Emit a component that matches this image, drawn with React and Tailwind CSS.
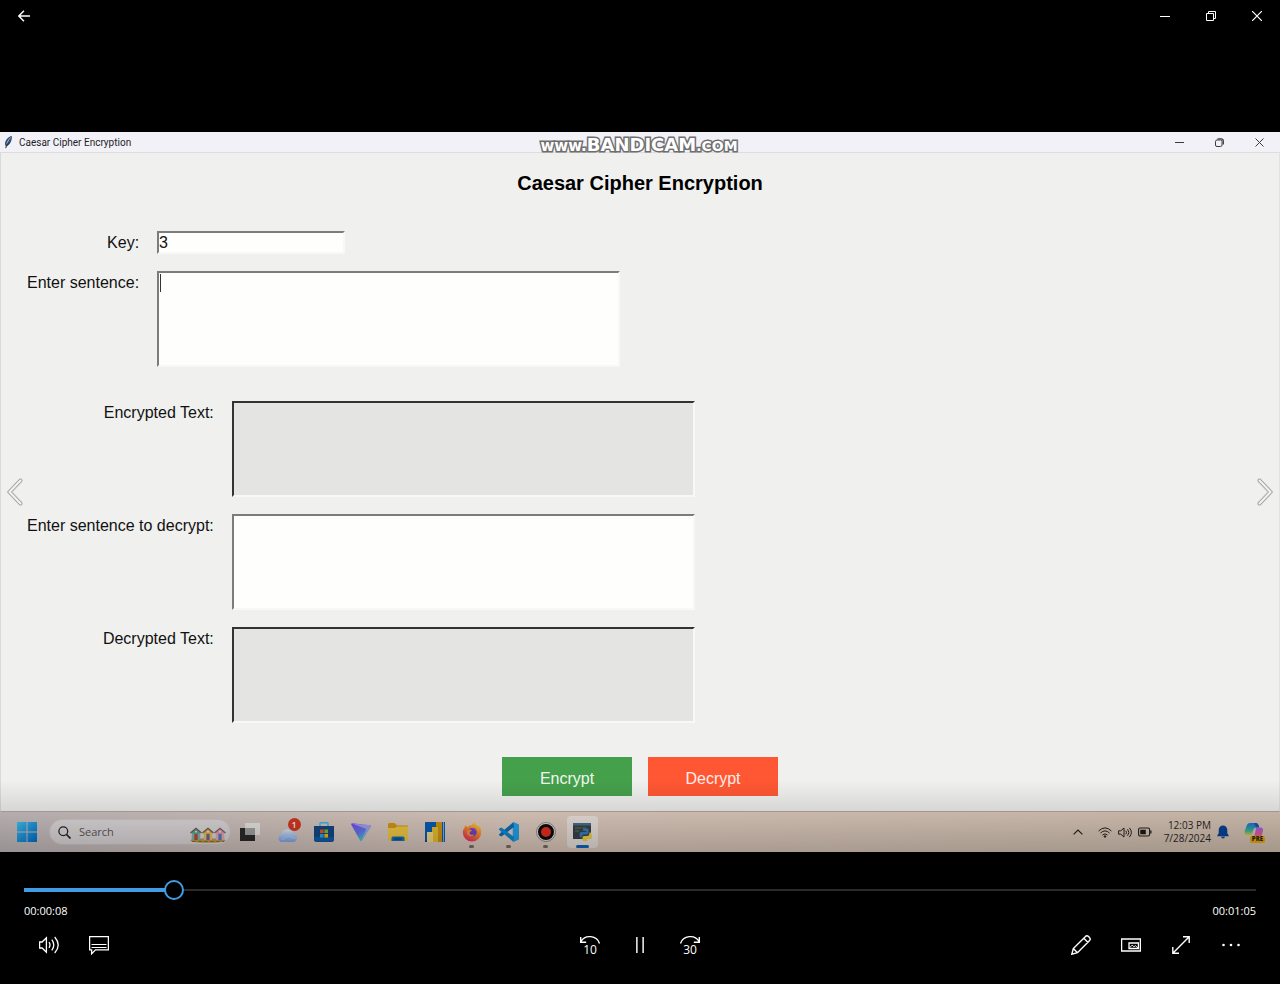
import React, { useState } from 'react';

const PLAYER_BUTTON =
  'flex h-[46px] w-[50px] items-center justify-center text-white hover:bg-white/10';

/* ---------- window caption icons ---------- */

function BackIcon() {
  return (
    <svg width="12" height="12" viewBox="0 0 12 12" fill="none" stroke="currentColor" strokeWidth="1.4">
      <path d="M12 6H1M6 .8.8 6 6 11.2" />
    </svg>
  );
}

function MinimizeIcon() {
  return (
    <svg width="10" height="10" viewBox="0 0 10 10" stroke="currentColor">
      <path d="M0 5.5h10" />
    </svg>
  );
}

function RestoreIcon() {
  return (
    <svg width="10" height="10" viewBox="0 0 10 10" fill="none" stroke="currentColor">
      <path d="M.5 2.500h7v7h-7zM2.500 2.500v-2h7v7h-2" />
    </svg>
  );
}

function CloseIcon() {
  return (
    <svg width="10" height="10" viewBox="0 0 10 10" fill="none" stroke="currentColor" strokeWidth="1.200">
      <path d="M0 0l10 10M10 0L0 10" />
    </svg>
  );
}

function RoundRestoreIcon() {
  return (
    <svg width="9" height="9" viewBox="0 0 9 9" fill="none" stroke="currentColor">
      <rect x=".5" y="2" width="6.500" height="6.500" rx="1.500" />
      <path d="M2.500 .9h3.700A2 2 0 0 1 8.300 2.900v3.600" strokeWidth="1.300" />
    </svg>
  );
}

function FeatherIcon() {
  return (
    <svg width="9" height="13" viewBox="0 0 9 13">
      <path d="M7.800 0C4.500.6 1 4.200 1 8.300l.6 1.500L1.500 13l.9-2.700C5.500 9.500 8.300 5 7.800 0z" fill="#2f4a68" />
      <path d="M7.200 1C5 2 2.600 5 2.200 8.500 4.600 6.800 6.800 4.500 7.200 1z" fill="#7fa6cf" />
      <path d="M6.500 2.500L1.800 12" stroke="#1c2733" strokeWidth=".7" />
    </svg>
  );
}

/* ---------- taskbar icons ---------- */

function StartIcon() {
  return (
    <svg width="20" height="20" viewBox="0 0 20 20">
      <defs>
        <linearGradient id="start" x1="0" y1="0" x2="1" y2="1">
          <stop offset="0" stopColor="#3fc4f5" />
          <stop offset="1" stopColor="#0070d0" />
        </linearGradient>
      </defs>
      <path d="M0 0h9.500v9.500H0zM10.500 0H20v9.500h-9.500zM0 10.500h9.500V20H0zM10.500 10.500H20V20h-9.500z" fill="url(#start)" />
    </svg>
  );
}

function SearchIcon() {
  return (
    <svg width="13" height="13" viewBox="0 0 13 13" fill="none" stroke="#26262a" strokeWidth="1.300">
      <circle cx="5.300" cy="5.300" r="4.400" />
      <path d="M8.500 8.500l4 4" strokeWidth="1.700" />
    </svg>
  );
}

function Hut({ x, wall, roof, door }) {
  return (
    <g transform={`translate(${x} 0)`}>
      <path d="M1.800 5.500L6 1.500l4.200 4V13H1.800z" fill={wall} />
      <path d="M.5 6L6 1.200 11.500 6" fill="none" stroke={roof} strokeWidth="1.200" />
      <path d="M3 6.500V13M9 6.500V13" stroke="#eee6df" strokeWidth=".6" />
      <rect x="4.500" y="7" width="3" height="6" fill={door} />
      <circle cx="6" cy="4.700" r=".9" fill="#f5f0e4" />
    </g>
  );
}

function BeachHutsIcon() {
  return (
    <svg width="36" height="16" viewBox="0 0 36 16">
      <ellipse cx="18" cy="13.500" rx="17.500" ry="2.300" fill="#c99b4a" />
      <Hut x={0} wall="#5aa895" roof="#6d5b58" door="#d0443b" />
      <Hut x={24} wall="#e79ab0" roof="#7b6265" door="#4d83c4" />
      <Hut x={12} wall="#e4b840" roof="#71594a" door="#7161a8" />
      <path d="M2 14.500h32" stroke="#8c7a35" strokeWidth="1" strokeDasharray="4 2" />
    </svg>
  );
}

function TaskViewIcon() {
  return (
    <svg width="20" height="20" viewBox="0 0 20 20">
      <path d="M0 6h15v13H0z" fill="#2b2b2a" />
      <path d="M5 1h15v12H5z" fill="#f3f2ef" opacity=".85" />
      <path d="M5 6h10v7H5z" fill="#a5a5a2" />
    </svg>
  );
}

function WeatherIcon() {
  return (
    <svg width="24" height="26" viewBox="0 0 24 26">
      <defs>
        <linearGradient id="cloud" x1="0" y1="0" x2="0" y2="1">
          <stop offset="0" stopColor="#e2edff" />
          <stop offset="1" stopColor="#7fa7ea" />
        </linearGradient>
      </defs>
      <path d="M5 24a4.200 4.200 0 0 1-.2-8.300 6 6 0 0 1 11.300-.8 4.700 4.700 0 0 1 .6 9.100z" fill="url(#cloud)" />
      <path d="M4.500 21c3 1 4.500-4 8-2.500s4 2 7 1.500" fill="none" stroke="#bcd2fa" />
    </svg>
  );
}

function StoreIcon() {
  return (
    <svg width="20" height="20" viewBox="0 0 20 20">
      <path d="M6 4V1.500Q6 .8 6.800.8h6.400q.8 0 .8.700V4" fill="none" stroke="#3bbdee" strokeWidth="1.400" />
      <path d="M0 4h20v13a3 3 0 0 1-3 3H3a3 3 0 0 1-3-3z" fill="#144987" />
      <path d="M0 15h20v2a3 3 0 0 1-3 3H3a3 3 0 0 1-3-3z" fill="#0f5dab" />
      <path d="M6 7.500h3.600v3.600H6z" fill="#f0552c" />
      <path d="M10.400 7.500H14v3.600h-3.600z" fill="#7fc231" />
      <path d="M6 12h3.600v3.600H6z" fill="#28a9ea" />
      <path d="M10.400 12H14v3.600h-3.600z" fill="#fbbc14" />
    </svg>
  );
}

function TriangleAppIcon() {
  return (
    <svg width="20" height="19" viewBox="0 0 20 19">
      <defs>
        <linearGradient id="tri" x1="0" y1="0" x2=".6" y2="1">
          <stop offset="0" stopColor="#7a4cf5" />
          <stop offset=".55" stopColor="#6679ef" />
          <stop offset="1" stopColor="#45dccb" />
        </linearGradient>
      </defs>
      <path d="M1.200.3L19 2.200q1.300.3.700 1.600L11 17.500q-1 1.500-1.900 0L.3 1.800Q-.1.300 1.200.3z" fill="url(#tri)" />
      <path d="M1 .4L15.500 6 10 18 19.700 3.500 19 2.200z" fill="#b9b7fa" opacity=".75" />
    </svg>
  );
}

function FolderIcon() {
  return (
    <svg width="20" height="18" viewBox="0 0 20 18">
      <path d="M0 1.500Q0 0 1.500 0h5l2.500 2.500H19q1 0 1 1V8H0z" fill="#dc9a17" />
      <path d="M0 5h7l2-1.500h11V17q0 1-1 1H1q-1 0-1-1z" fill="#f8cf45" />
      <path d="M3.500 18v-3q0-1.500 1.500-1.500h10q1.500 0 1.500 1.500v3z" fill="#1571be" />
      <path d="M6 16h8" stroke="#0a4a83" strokeWidth="1.300" />
    </svg>
  );
}

function BarsAppIcon() {
  return (
    <svg width="20" height="20" viewBox="0 0 20 20">
      <path d="M0 0h20v20H0z" fill="#0860b8" />
      <path d="M18 0h1v20h-1z" fill="#8fb4d2" />
      <path d="M11 0h6v20h-6z" fill="#d39a13" />
      <path d="M7 5h6v15H7z" fill="#f1c232" />
      <path d="M2 10h6v10H2z" fill="#fae08a" />
      <path d="M0 18h2v2H0z" fill="#0a4f98" />
    </svg>
  );
}

function FirefoxIcon() {
  return (
    <svg width="20" height="20" viewBox="0 0 20 20">
      <defs>
        <linearGradient id="fox" x1=".8" y1="0" x2=".2" y2="1">
          <stop offset="0" stopColor="#ffdf3c" />
          <stop offset=".45" stopColor="#ff8a2b" />
          <stop offset="1" stopColor="#ec2868" />
        </linearGradient>
      </defs>
      <path d="M3.800 3.200C4 4.400 4.800 5 6 5c1.500-2 2.600-1.800 4-1.700C10.200 1.800 12 .4 12.800.2c.2 2 2.800 2.600 3.400 4.900l.9-1.300c1.600 1.900 2.200 4.200 2.100 6.400A9.200 9.200 0 0 1 .8 10.500c0-2.200.8-3.600 1.700-4.500.2-1.400.8-2.300 1.300-2.800z" fill="url(#fox)" />
      <circle cx="10.300" cy="10.300" r="4.300" fill="#7440db" />
      <path d="M5.500 8.200c2-1.400 3.200-.7 4.800.2-1 .9-2.700 1-2.700 2.600 0 1.800 3.100 2.600 5 .9-1.400 4-7.600 2.800-7.800-1.600z" fill="#ff9636" />
      <path d="M10 6c2.500-.5 5 1.500 4.500 4.700-.5-1.500-1.500-2.300-2.600-2.700z" fill="#a64be0" />
    </svg>
  );
}

function CodeIcon() {
  return (
    <svg width="20" height="20" viewBox="0 0 20 20">
      <path d="M14.500 0L20 2.500v15L14.500 20l-.8-4.500V5z" fill="#25a5ee" />
      <path d="M14.500 0l.5 5L2.500 14.500 0 13.200v-1z" fill="#0a72bf" />
      <path d="M14.500 20l.5-5L2.500 5.500 0 6.800v1z" fill="#1289d6" />
    </svg>
  );
}

function RecordIcon() {
  return (
    <svg width="20" height="20" viewBox="0 0 20 20">
      <circle cx="10" cy="10" r="9.500" fill="#e8e4e1" stroke="#77706b" strokeWidth=".7" />
      <circle cx="10" cy="10" r="8" fill="#0c0c0c" />
      <circle cx="10" cy="10" r="5" fill="#ea2f20" />
    </svg>
  );
}

function PythonWindowIcon() {
  return (
    <svg width="20" height="19" viewBox="0 0 20 19">
      <path d="M0 0h18v16H0z" fill="#3a444a" />
      <path d="M0 0h18v2.500H0z" fill="#47728f" />
      <path d="M2 5h6M2 8h4M9 5h4" stroke="#53815b" strokeWidth="1" />
      <path d="M10 6q3-1.500 5.500 0v4q0 1.500-1.500 1.500h-3q-2 0-2 3H8q-1.500 0-1.500-3T8.500 9H13V8h-3z" fill="#3d7ebf" />
      <path d="M15 17.500q-3 1.500-5.500 0v-3q0-1.500 1.500-1.500h3q2.500 0 2.500-3.500h1Q19 10 19 13t-2 3h-3v.7h1z" fill="#f9d649" />
    </svg>
  );
}

function TrayChevron() {
  return (
    <svg width="10" height="6" viewBox="0 0 10 6" fill="none" stroke="#26231f" strokeWidth="1.200">
      <path d="M.6 5.400L5 1l4.400 4.400" />
    </svg>
  );
}

function WifiIcon() {
  return (
    <svg width="14" height="11" viewBox="0 0 14 11" fill="none" stroke="#26231f" strokeWidth="1">
      <path d="M.6 4Q7-2.200 13.400 4M2.500 6q4.500-4.200 9 0M4.500 8Q7 5.800 9.500 8" />
      <circle cx="7" cy="9.500" r=".8" fill="#26231f" />
    </svg>
  );
}

function SpeakerIcon() {
  return (
    <svg width="14" height="11" viewBox="0 0 14 11" fill="none" stroke="#26231f" strokeWidth="1">
      <path d="M.6 3.800h2.200L6 1v9L2.800 7.200H.6zM7.800 3.700q1.400 1.800 0 3.600M9.600 2.300q2.700 3.200 0 6.400M11.400.9q4 4.600 0 9.200" />
    </svg>
  );
}

function BatteryIcon() {
  return (
    <svg width="14" height="10" viewBox="0 0 14 10">
      <rect x=".6" y="1" width="11" height="8" rx="1.500" fill="none" stroke="#26231f" strokeWidth="1.100" />
      <path d="M2.300 2.700h5.500v4.600H2.300zM12.300 3.500h1.200v3h-1.200z" fill="#1b1916" />
    </svg>
  );
}

function BellIcon() {
  return (
    <svg width="12" height="14" viewBox="0 0 12 14" fill="#07449c">
      <path d="M6 .5a4.300 4.300 0 0 1 4.300 4.300v3.400l1.400 2.300v.7H.3v-.7l1.400-2.300V4.800A4.300 4.300 0 0 1 6 .5zM4 11.800h4q-.4 1.700-2 1.700t-2-1.700z" />
    </svg>
  );
}

function CopilotIcon() {
  return (
    <svg width="20" height="20" viewBox="0 0 20 20">
      <defs>
        <linearGradient id="copA" x1="0" y1="0" x2="0" y2="1">
          <stop offset="0" stopColor="#1f74e4" />
          <stop offset=".6" stopColor="#35b5a0" />
          <stop offset="1" stopColor="#d7d33d" />
        </linearGradient>
        <linearGradient id="copB" x1="0" y1="0" x2="0" y2="1">
          <stop offset="0" stopColor="#a267ec" />
          <stop offset=".6" stopColor="#ec5f9a" />
          <stop offset="1" stopColor="#ff9b53" />
        </linearGradient>
      </defs>
      <path d="M6 1h6q2 0 2.500 2l.7 2.500h-3Q10 5.500 9.300 8l-1.500 5H3.500Q0 13 .6 9.500L2.500 4Q3.500 1 6 1z" fill="url(#copA)" />
      <path d="M11 1q3.500 0 4.200 4.500H12L10 1z" fill="#2250bd" />
      <path d="M12 5.500h5q2.500.5 2 3.500l-1.500 5q-1 3-3.500 3H8q2-1 2.500-3.500l1-4.500z" fill="url(#copB)" />
    </svg>
  );
}

/* ---------- player icons ---------- */

function VolumeIcon() {
  return (
    <svg width="20" height="18" viewBox="0 0 20 18" fill="none" stroke="currentColor" strokeWidth="1.300">
      <path d="M.6 6h2.500L7.400 1.800v14.400L3.100 12H.6zM10 6.200q2 2.800 0 5.600M12.800 3.700q4 5.300 0 10.600M15.700 1q7 8 0 16" />
    </svg>
  );
}

function SubtitleIcon() {
  return (
    <svg width="20" height="19" viewBox="0 0 20 19" fill="none" stroke="currentColor" strokeWidth="1.300">
      <path d="M.6.600h18.800v13.300H6.500L2.600 17.800v-3.900h-2z" />
      <path d="M2.500 8.500h15M2.500 11.500h15" strokeWidth="1" />
    </svg>
  );
}

function SkipIcon({ forward, label }) {
  return (
    <svg width="22" height="26" viewBox="0 -3 22 26" fill="none" stroke="currentColor" strokeWidth="1.400">
      {forward ? (
        <path d="M1.500 8.500C4 .2 16-.8 20 6.500M20.300 2v5.200h-5.500" />
      ) : (
        <path d="M20.500 8.500C18 .2 6-.8 2 6.500M1.700 2v5.200h5.500" />
      )}
      <text
        x="11"
        y="18.500"
        textAnchor="middle"
        fill="currentColor"
        stroke="none"
        fontSize="12"
        fontFamily="Open Sans, Noto Sans, sans-serif"
      >
        {label}
      </text>
    </svg>
  );
}

function PauseIcon() {
  return (
    <svg width="8" height="16" viewBox="0 0 8 16" fill="#d8d8d8">
      <path d="M0 0h1.700v16H0zM6.300 0H8v16H6.300z" />
    </svg>
  );
}

function PencilIcon() {
  return (
    <svg width="20" height="20" viewBox="0 0 20 20" fill="none" stroke="currentColor" strokeWidth="1.400">
      <path d="M.8 19.200l1.500-5.700L14.500 1.400q1.500-1.300 3.100.2l.8.800q1.500 1.600.2 3.100L6.500 17.700zM2.300 13.500l4.200 4.200M12.800 3.200l4.200 4.200" />
    </svg>
  );
}

function MiniViewIcon() {
  return (
    <svg width="20" height="14" viewBox="0 0 20 14" fill="none" stroke="currentColor" strokeWidth="1.300">
      <path d="M.6 1h18.800v12H.6zM8 5h9.400v5.500H8z" />
      <path d="M8.500 9.700l2.600-2.500 1.800 1.500 1.500-1 2.600 2.200" strokeWidth=".9" />
    </svg>
  );
}

function FullscreenIcon() {
  return (
    <svg width="18" height="18" viewBox="0 0 18 18" fill="none" stroke="currentColor" strokeWidth="1.400">
      <path d="M.8 17.200L17.200.8M11 .8h6.200V7M.8 11v6.200H7" />
    </svg>
  );
}

function MoreIcon() {
  return (
    <svg width="18" height="4" viewBox="0 0 18 4" fill="currentColor">
      <circle cx="1.500" cy="2" r="1.300" />
      <circle cx="9" cy="2" r="1.300" />
      <circle cx="16.500" cy="2" r="1.300" />
    </svg>
  );
}

function EdgeChevron({ flip }) {
  const path = flip ? 'M2.500 2.500L13.500 14l-11 11.500' : 'M13.500 2.500L2.500 14l11 11.500';
  return (
    <svg width="16" height="28" viewBox="0 0 16 28" fill="none" strokeLinecap="round">
      <path d={path} stroke="#dadada" strokeWidth="4.800" />
      <path d={path} stroke="#9c9c9c" strokeWidth="3.500" />
      <path d={path} stroke="#f4f4f4" strokeWidth="2" />
    </svg>
  );
}

/* ---------- cipher window ---------- */

function Label({ htmlFor, children }) {
  return (
    <label htmlFor={htmlFor} className="text-right text-base leading-6 whitespace-nowrap text-[#111]">
      {children}
    </label>
  );
}

const FIELD =
  'block border-2 border-t-[#7c7c7c] border-l-[#7c7c7c] border-r-[#f8f8f7] border-b-[#f8f8f7] bg-[#fefefd] text-base leading-5 text-[#111] outline-none';
const AREA = 'h-[96px] w-[463px] max-w-full resize-none';
const OUTPUT =
  'block border-2 border-t-[#333] border-l-[#333] border-r-[#f8f8f7] border-b-[#f8f8f7] bg-[#e4e4e3] text-base text-[#111] outline-none';

function TitleBar() {
  return (
    <div className="flex h-5 items-center bg-[#f2f1f8] pl-1 text-[#3c3c40]">
      <FeatherIcon />
      <span className="ml-[6px] font-['Roboto','Noto_Sans',sans-serif] text-[10px] text-[#1e1e1e]">
        Caesar Cipher Encryption
      </span>
      <div className="ml-auto flex pr-px">
        <button type="button" aria-label="Minimize window" className="flex h-5 w-10 items-center justify-center">
          <svg width="9" height="9" viewBox="0 0 9 9" stroke="currentColor">
            <path d="M0 4.500h9" />
          </svg>
        </button>
        <button type="button" aria-label="Restore window" className="flex h-5 w-10 items-center justify-center">
          <RoundRestoreIcon />
        </button>
        <button type="button" aria-label="Close window" className="flex h-5 w-10 items-center justify-center">
          <svg width="9" height="9" viewBox="0 0 9 9" stroke="currentColor">
            <path d="M.5.500l8 8M8.500.500l-8 8" />
          </svg>
        </button>
      </div>
    </div>
  );
}

function CipherForm() {
  return (
    <form
      onSubmit={(e) => e.preventDefault()}
      className="border border-t-[#dddddf] border-r-[#e2e2e2] border-b-[#b3aaa6] border-l-[#dadada] bg-[#f0f0ef] pt-[14px] pb-[15px] font-['Liberation_Sans',Arial,sans-serif]"
    >
      <h1 className="text-center text-xl leading-8 font-bold text-black">Caesar Cipher Encryption</h1>

      <div className="mt-8 grid grid-cols-[auto_1fr] items-start gap-x-[18px] gap-y-4 pl-[26px]">
        <Label htmlFor="key">Key:</Label>
        <input id="key" type="text" defaultValue="3" className={`${FIELD} h-[23px] w-[188px]`} />
        <Label htmlFor="sentence">Enter sentence:</Label>
        <div className="relative">
          <textarea id="sentence" className={`${FIELD} ${AREA}`} />
          <span className="absolute top-[3px] left-[3px] h-[18px] w-px bg-[#333]" />
        </div>
      </div>

      <div className="mt-[34px] grid grid-cols-[auto_1fr] items-start gap-x-[18px] gap-y-[17px] pl-[26px]">
        <Label htmlFor="encrypted">Encrypted Text:</Label>
        <textarea id="encrypted" readOnly className={`${OUTPUT} ${AREA}`} />
        <Label htmlFor="cipher">Enter sentence to decrypt:</Label>
        <textarea id="cipher" className={`${FIELD} ${AREA}`} />
        <Label htmlFor="decrypted">Decrypted Text:</Label>
        <textarea id="decrypted" readOnly className={`${OUTPUT} ${AREA}`} />
      </div>

      <div className="mt-[34px] flex justify-center gap-4">
        <button type="submit" className="h-[39px] w-[130px] bg-[#45a04c] pt-1 text-base text-[#f0f8ee]">
          Encrypt
        </button>
        <button type="button" className="h-[39px] w-[130px] bg-[#ff5733] pt-1 text-base text-[#ffeee8]">
          Decrypt
        </button>
      </div>
    </form>
  );
}

function TaskButton({ label, running, active, children }) {
  return (
    <button type="button" aria-label={label} className="relative flex h-10 w-[37px] items-center justify-center">
      {active && <span className="absolute inset-x-[3px] top-1 bottom-1 rounded bg-white/50" />}
      <span className="relative">{children}</span>
      {running && !active && <span className="absolute bottom-1 h-[3px] w-[5px] rounded-full bg-[#7b7069]" />}
      {active && <span className="absolute bottom-1 h-[3px] w-[13px] rounded-full bg-[#0f66c4]" />}
    </button>
  );
}

function Taskbar() {
  return (
    <div className="flex h-10 items-center bg-linear-to-r from-[#cbc2c4] via-[#e6d2c5] via-40% to-[#dcc9b9] font-['Open_Sans','Noto_Sans',sans-serif]">
      <button type="button" aria-label="Start" className="ml-[17px] flex h-10 w-5 items-center justify-center">
        <StartIcon />
      </button>
      <div className="ml-3 flex h-[26px] w-[182px] items-center rounded-full border border-[#d5cdcf] bg-[#e4dfe1] pr-1 pl-2">
        <SearchIcon />
        <input
          type="search"
          aria-label="Search"
          placeholder="Search"
          className="ml-2 w-0 flex-1 bg-transparent text-[11px] outline-none placeholder:text-[#5c5a5c]"
        />
        <span className="pt-[5px]"><BeachHutsIcon /></span>
      </div>
      <div className="flex">
        <TaskButton label="Task view"><TaskViewIcon /></TaskButton>
        <TaskButton label="Weather">
          <span className="relative block">
            <span className="block pb-[2px] pl-1"><WeatherIcon /></span>
            <span className="absolute top-0 right-0 flex h-[13px] w-[13px] items-center justify-center rounded-full bg-[#d93a20] text-[9px] font-semibold text-white">
              1
            </span>
          </span>
        </TaskButton>
        <TaskButton label="Store"><StoreIcon /></TaskButton>
        <TaskButton label="Proton VPN"><TriangleAppIcon /></TaskButton>
        <TaskButton label="File Explorer"><FolderIcon /></TaskButton>
        <TaskButton label="Charts"><BarsAppIcon /></TaskButton>
        <TaskButton label="Firefox" running><FirefoxIcon /></TaskButton>
        <TaskButton label="Visual Studio Code" running><CodeIcon /></TaskButton>
        <TaskButton label="Recorder" running><RecordIcon /></TaskButton>
        <TaskButton label="Python" active><PythonWindowIcon /></TaskButton>
      </div>
      <div className="ml-auto flex items-center pr-4">
        <button type="button" aria-label="Show hidden icons" className="mr-[15px]"><TrayChevron /></button>
        <button type="button" aria-label="Network, volume and battery" className="flex items-center gap-[6px]">
          <WifiIcon />
          <SpeakerIcon />
          <BatteryIcon />
        </button>
        <div className="ml-3 text-right text-[10px] leading-[13px] whitespace-nowrap text-[#2b2723]">
          <div>12:03 PM</div>
          <div>7/28/2024</div>
        </div>
        <button type="button" aria-label="Notifications" className="ml-[6px]"><BellIcon /></button>
        <button type="button" aria-label="Copilot" className="relative ml-[15px] block">
          <CopilotIcon />
          <span className="absolute -right-px -bottom-px rounded-xs bg-[#e8ad19] px-[2px] text-[6px] leading-[7px] font-extrabold text-[#33260a]">
            PRE
          </span>
        </button>
      </div>
    </div>
  );
}

function Watermark() {
  return (
    <div className="pointer-events-none absolute inset-x-0 top-0 flex h-[26px] items-baseline justify-center pr-[2px] font-['DejaVu_Sans',sans-serif] leading-[26px] font-bold whitespace-nowrap text-white [paint-order:stroke_fill] [-webkit-text-stroke:3px_#6e6e6e]">
      <span className="text-[15px]">www.</span>
      <span className="text-[18px]">BANDICAM</span>
      <span className="text-[14px]">.COM</span>
    </div>
  );
}

/* ---------- player ---------- */

const DURATION = 65;

function Controls() {
  const [time, setTime] = useState(7.5);
  const ratio = time / DURATION;
  return (
    <footer className="px-6 pt-7 pb-4 font-['Open_Sans','Noto_Sans',sans-serif]">
      <input
        type="range"
        aria-label="Seek"
        min="0"
        max={DURATION}
        step="0.1"
        value={time}
        onChange={(e) => setTime(Number(e.target.value))}
        style={{ backgroundSize: `calc(${ratio * 100}% - ${ratio * 20}px + 2px) 4px, 100% 2px` }}
        className="block h-5 w-full cursor-pointer appearance-none bg-transparent bg-[linear-gradient(#429ce3,#429ce3),linear-gradient(#2b2b2b,#2b2b2b)] bg-[position:left_center] bg-no-repeat outline-none [&::-webkit-slider-thumb]:h-5 [&::-webkit-slider-thumb]:w-5 [&::-webkit-slider-thumb]:appearance-none [&::-webkit-slider-thumb]:rounded-full [&::-webkit-slider-thumb]:border-2 [&::-webkit-slider-thumb]:border-[#429ce3] [&::-webkit-slider-thumb]:bg-black"
      />
      <div className="flex justify-between text-[11px] leading-[22px] text-white">
        <span>00:00:08</span>
        <span>00:01:05</span>
      </div>
      <div className="grid grid-cols-3 items-center">
        <div className="flex">
          <button type="button" aria-label="Volume" className={PLAYER_BUTTON}><VolumeIcon /></button>
          <button type="button" aria-label="Subtitles" className={PLAYER_BUTTON}><SubtitleIcon /></button>
        </div>
        <div className="flex justify-center">
          <button type="button" aria-label="Skip back" className={PLAYER_BUTTON}><SkipIcon label="10" /></button>
          <button type="button" aria-label="Pause" className={PLAYER_BUTTON}><PauseIcon /></button>
          <button type="button" aria-label="Skip forward" className={PLAYER_BUTTON}><SkipIcon forward label="30" /></button>
        </div>
        <div className="flex justify-end">
          <button type="button" aria-label="Edit" className={PLAYER_BUTTON}><PencilIcon /></button>
          <button type="button" aria-label="Mini view" className={PLAYER_BUTTON}><MiniViewIcon /></button>
          <button type="button" aria-label="Full screen" className={PLAYER_BUTTON}><FullscreenIcon /></button>
          <button type="button" aria-label="More" className={PLAYER_BUTTON}><MoreIcon /></button>
        </div>
      </div>
    </footer>
  );
}

export default function App() {
  return (
    <div className="flex min-h-screen flex-col bg-black">
      <header className="mb-[100px] flex h-8 text-white">
        <button type="button" aria-label="Back" className="flex w-12 items-center justify-center">
          <BackIcon />
        </button>
        <div className="ml-auto flex">
          <button type="button" aria-label="Minimize" className="flex w-[46px] items-center justify-center"><MinimizeIcon /></button>
          <button type="button" aria-label="Restore" className="flex w-[46px] items-center justify-center"><RestoreIcon /></button>
          <button type="button" aria-label="Close" className="flex w-[46px] items-center justify-center"><CloseIcon /></button>
        </div>
      </header>

      <main className="relative">
        <TitleBar />
        <CipherForm />
        <Taskbar />
        <Watermark />
        <div className="pointer-events-none absolute inset-x-0 bottom-0 h-[72px] bg-linear-to-b from-black/0 to-black/25" />
        <button type="button" aria-label="Previous" className="absolute top-1/2 left-[7px] -translate-y-1/2"><EdgeChevron /></button>
        <button type="button" aria-label="Next" className="absolute top-1/2 right-[7px] -translate-y-1/2"><EdgeChevron flip /></button>
      </main>

      <Controls />
    </div>
  );
}
